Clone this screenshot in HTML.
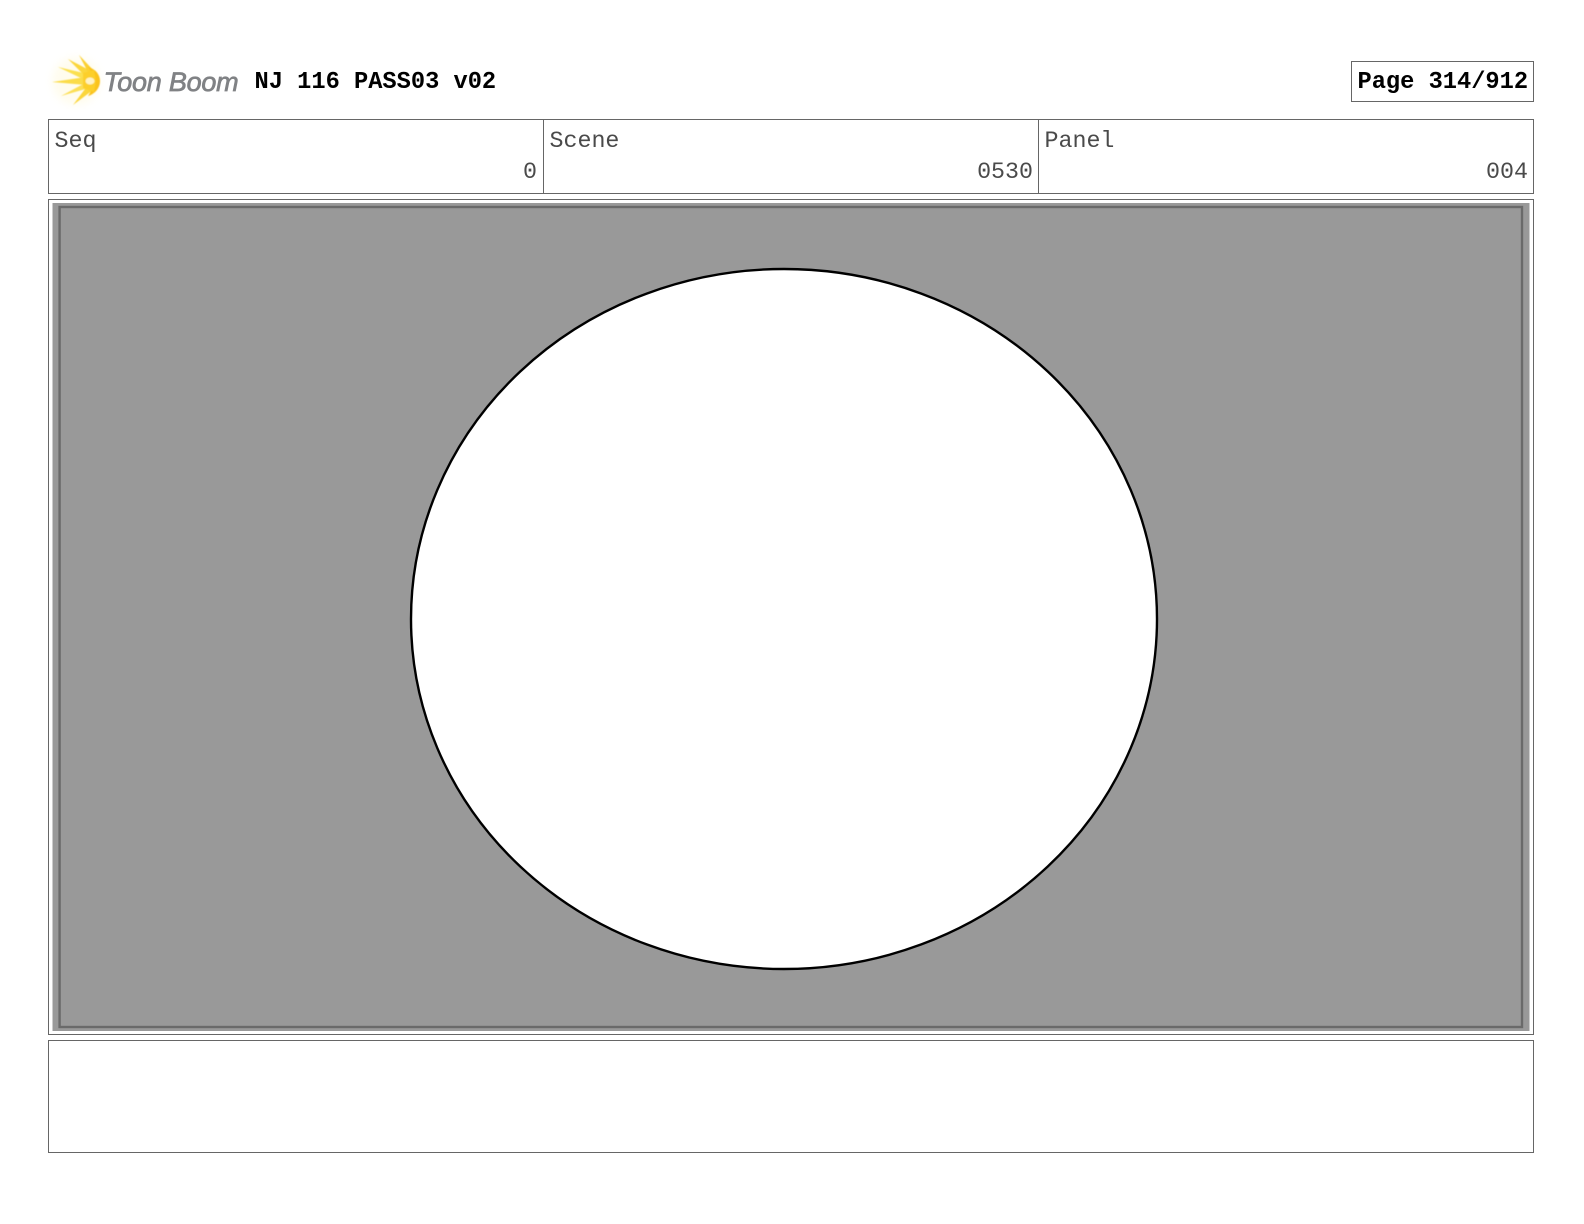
<!DOCTYPE html>
<html>
<head>
<meta charset="utf-8">
<style>
html,body{margin:0;padding:0;background:#fff;}
body{position:relative;width:1584px;height:1224px;overflow:hidden;font-family:"Liberation Mono",monospace;color:#111;}
.b{position:absolute;box-sizing:border-box;border:1px solid #666;background:#fff;}
.t{position:absolute;white-space:pre;line-height:1;}
.bold{font-weight:bold;font-size:23.7px;color:#000;}
.reg{font-size:23.3px;color:#4a4a4a;}
.r{text-align:right;}
</style>
</head>
<body>
<svg style="position:absolute;left:40px;top:45px" width="70" height="70" viewBox="40 45 70 70">
<defs><filter id="f" x="-20%" y="-20%" width="140%" height="140%"><feGaussianBlur stdDeviation="0.6"/></filter>
<filter id="g" x="-30%" y="-30%" width="160%" height="160%"><feGaussianBlur stdDeviation="4"/></filter></defs>
<ellipse cx="76" cy="81" rx="24" ry="24" fill="#fff6c8" opacity=".3" filter="url(#g)"/>
<g filter="url(#f)">
<path d="M58 67 L88 74 L85 80 Z" fill="#fbe050"/>
<path d="M68 59 L91 71 L86 77 Z" fill="#fbd63a"/>
<path d="M79 55 L94 71 L89 74 Z" fill="#fbd030"/>
<path d="M52 82 L86 77 L86 85 Z" fill="#fbdc48"/>
<path d="M61 96 L87 82 L89 88 Z" fill="#fcdf55"/>
<path d="M73 105 L88 85 L93 90 Z" fill="#fbd63a"/>
<path d="M88 67 C96 69 100 75 100 81 C100 88 95 94 88 96 C92 90 93 86 93 81 C93 76 92 72 88 67 Z" fill="#fbc31a"/>
<path d="M83 73 L94 70 L96 81 L94 92 L83 88 Z" fill="#fccf2c"/>
<ellipse cx="90" cy="81" rx="4.5" ry="3.5" fill="#fff3c4"/>
</g>
</svg>
<div class="t" style="left:103.5px;top:69px;font-family:'Liberation Sans',sans-serif;font-style:italic;font-size:27px;color:#808285;letter-spacing:-.25px;-webkit-text-stroke:.7px #808285;">Toon Boom</div>
<div class="t bold" style="left:254.5px;top:71px;">NJ 116 PASS03 v02</div>

<div class="b" style="left:1351px;top:61px;width:183px;height:41px;"></div>
<div class="t bold" style="left:1357.5px;top:71px;">Page 314/912</div>

<div class="b" style="left:48px;top:119px;width:1486px;height:75px;"></div>
<div style="position:absolute;left:543px;top:119px;width:1px;height:75px;background:#666;"></div>
<div style="position:absolute;left:1038px;top:119px;width:1px;height:75px;background:#666;"></div>
<div class="t reg" style="left:54.5px;top:130px;">Seq</div>
<div class="t reg" style="left:549.5px;top:130px;">Scene</div>
<div class="t reg" style="left:1044.5px;top:130px;">Panel</div>
<div class="t reg r" style="left:337px;width:200px;top:161px;">0</div>
<div class="t reg r" style="left:833px;width:200px;top:161px;">0530</div>
<div class="t reg r" style="left:1328px;width:200px;top:161px;">004</div>

<div class="b" style="left:48px;top:199px;width:1486px;height:836px;"></div>
<svg style="position:absolute;left:0;top:0" width="1584" height="1224" viewBox="0 0 1584 1224">
<rect x="52.5" y="203" width="1477" height="828" fill="#999999"/>
<rect x="59.6" y="207" width="1462.4" height="820" fill="none" stroke="#6a6a6a" stroke-width="2.4"/>
<ellipse cx="784" cy="619" rx="373" ry="350" fill="#fff" stroke="#000" stroke-width="2.4"/>
</svg>

<div class="b" style="left:48px;top:1040px;width:1486px;height:113px;"></div>
</body>
</html>
